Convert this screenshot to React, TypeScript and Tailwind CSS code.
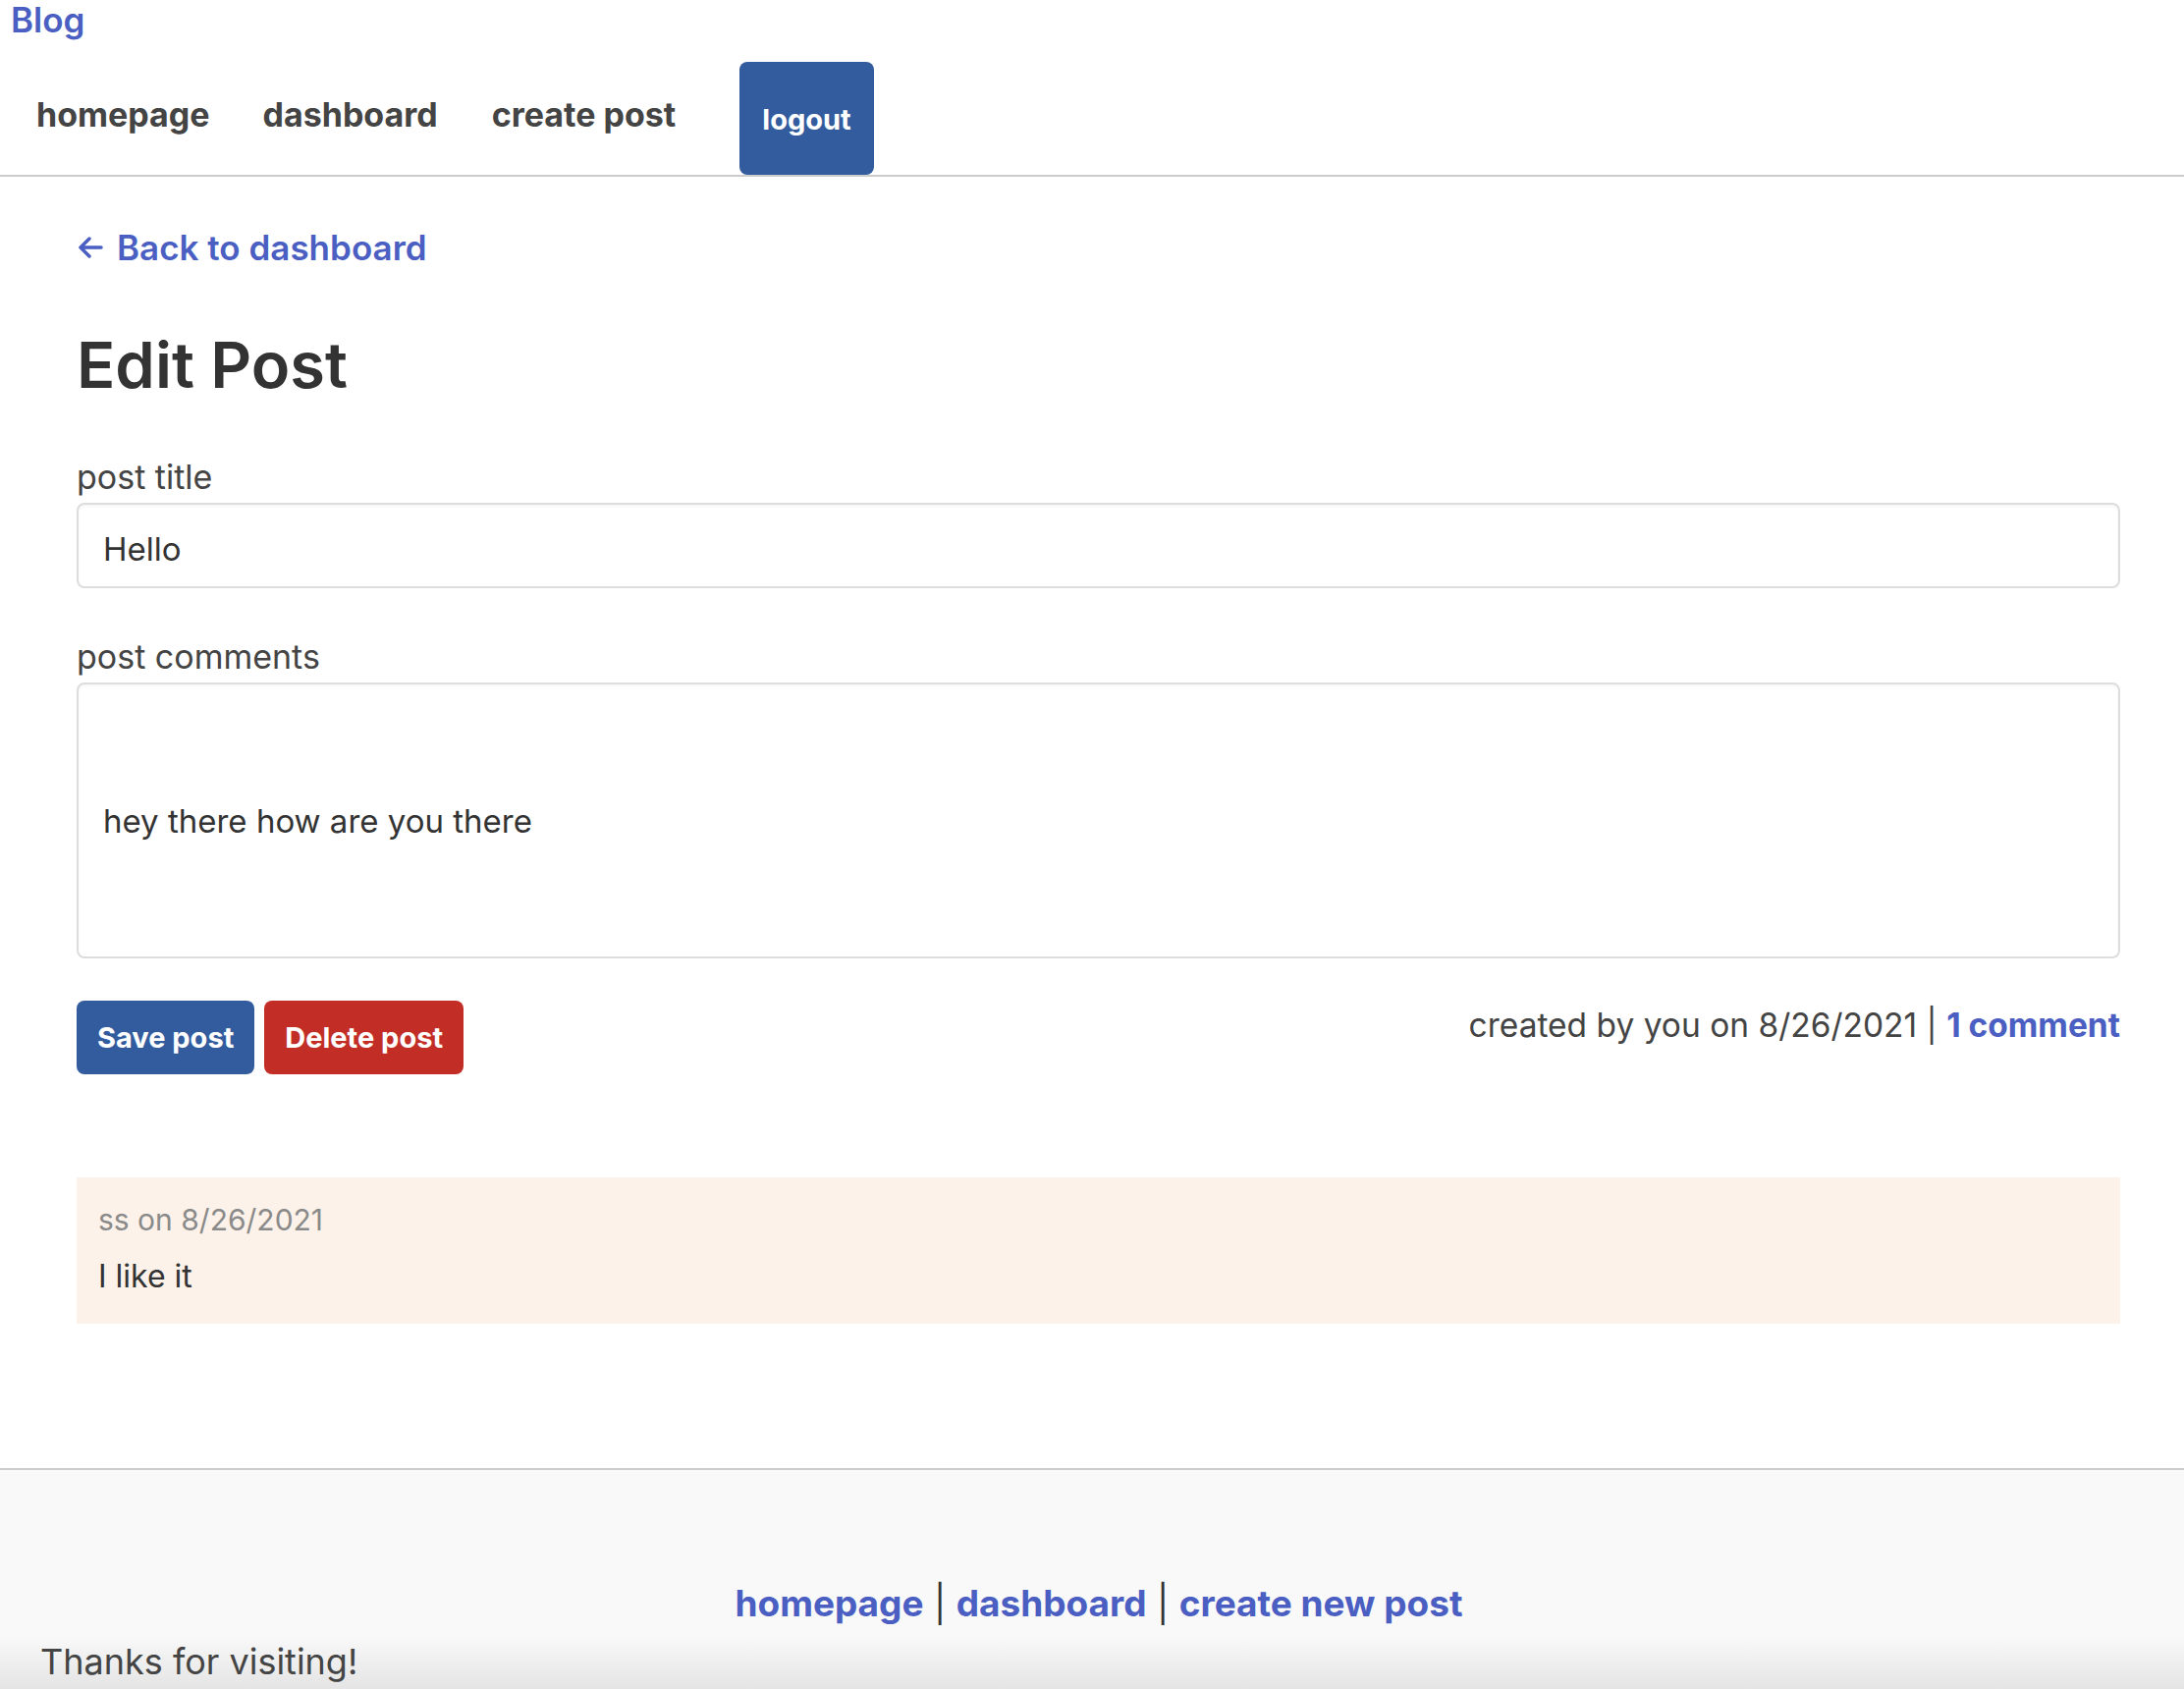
import React from "react";

const BackArrow = () => (
  <svg width="28" height="26" viewBox="0 0 28 26" fill="none">
    <path
      d="M25 13H4M13 4L4 13L13 22"
      stroke="currentColor"
      strokeWidth="3.5"
      strokeLinecap="round"
      strokeLinejoin="round"
    />
  </svg>
);

const Header = () => {
  return (
    <header className="border-b-2 border-[#cccccc]">
      <a href="#" className="block pl-[11px] text-[35px] leading-[40px] font-semibold text-[#4b5fc3]">
        Blog
      </a>
      <nav className="mt-[23px] flex items-center pl-[10px]">
        <a href="#" className="mb-[8px] px-[27px] text-[34px] leading-[40px] font-bold text-[#444444]">
          homepage
        </a>
        <a href="#" className="mb-[8px] px-[27px] text-[34px] leading-[40px] font-bold text-[#444444]">
          dashboard
        </a>
        <a href="#" className="mb-[8px] px-[28px] text-[34px] leading-[40px] font-bold text-[#444444]">
          create post
        </a>
        <button className="ml-[37px] h-[115px] rounded-lg bg-[#335c9e] px-[23px] pt-[2px] text-[29px] font-bold text-white">
          logout
        </button>
      </nav>
    </header>
  );
};

const Footer = () => {
  return (
    <footer className="mt-[147px] h-[226px] border-t-2 border-[#cccccc] bg-gradient-to-b from-[#f9f9f9] via-[#f9f9f9] via-75% to-[#e4e4e4]">
      <p className="pt-[114px] pl-[14px] text-center text-[37px] leading-[44px] text-[#333333]">
        <a href="#" className="font-bold text-[#4b5fc3]">homepage</a> |{" "}
        <a href="#" className="font-bold text-[#4b5fc3]">dashboard</a> |{" "}
        <a href="#" className="font-bold text-[#4b5fc3]">create new post</a>
      </p>
      <p className="mt-[17px] pl-[41px] text-[36px] leading-[40px] text-[#444444]">
        Thanks for visiting!
      </p>
    </footer>
  );
};

export default function App() {
  return (
    <div className="min-h-screen bg-white font-['Inter','Liberation_Sans',sans-serif] text-[#333333]">
      <Header />
      <main className="ml-[78px] mr-[65px]">
        <a href="#" className="mt-[52px] flex items-center gap-[13px] text-[35px] leading-[40px] font-semibold text-[#4b5fc3]">
          <BackArrow />
          <span>Back to dashboard</span>
        </a>
        <h1 className="mt-[60px] text-[65px] leading-[80px] font-semibold text-[#333333]">
          Edit Post
        </h1>
        <form onSubmit={(e) => e.preventDefault()}>
          <label className="mt-[54px] block text-[34px] leading-[40px] text-[#444444]">
            post title
          </label>
          <input
            type="text"
            defaultValue="Hello"
            className="mt-[6px] block h-[87px] w-full rounded-lg border-2 border-[#dddddd] px-[25px] pt-[6px] text-[33px] leading-[40px] text-[#333333] shadow-[inset_0_2px_3px_rgba(0,0,0,0.04)] outline-none"
          />
          <label className="mt-[50px] block text-[34px] leading-[40px] text-[#444444]">
            post comments
          </label>
          <textarea
            defaultValue="hey there how are you there"
            className="mt-[6px] block h-[281px] w-full resize-none rounded-lg border-2 border-[#dddddd] px-[25px] pt-[119px] text-[33px] leading-[40px] text-[#333333] shadow-[inset_0_2px_3px_rgba(0,0,0,0.04)] outline-none"
          />
          <div className="mt-[43px] flex items-start justify-between">
            <div className="flex gap-[10px]">
              <button className="h-[75px] rounded-lg bg-[#335c9e] px-[21px] text-[29px] font-bold text-white">
                Save post
              </button>
              <button className="h-[75px] rounded-lg bg-[#c22e26] px-[21px] text-[29px] font-bold text-white">
                Delete post
              </button>
            </div>
            <p className="mt-[5px] text-[33.5px] leading-[40px] text-[#444444]">
              created by you on 8/26/2021 |{" "}
              <a href="#" className="font-bold text-[#4b5fc3]">1 comment</a>
            </p>
          </div>
        </form>
        <div className="mt-[105px] bg-[#fcf2e9] px-[22px] pt-[23px] pb-[28px]">
          <p className="text-[30px] leading-[40px] text-[#8a8a8a]">ss on 8/26/2021</p>
          <p className="mt-[18px] text-[32px] leading-[40px] text-[#333333]">I like it</p>
        </div>
      </main>
      <Footer />
    </div>
  );
}
